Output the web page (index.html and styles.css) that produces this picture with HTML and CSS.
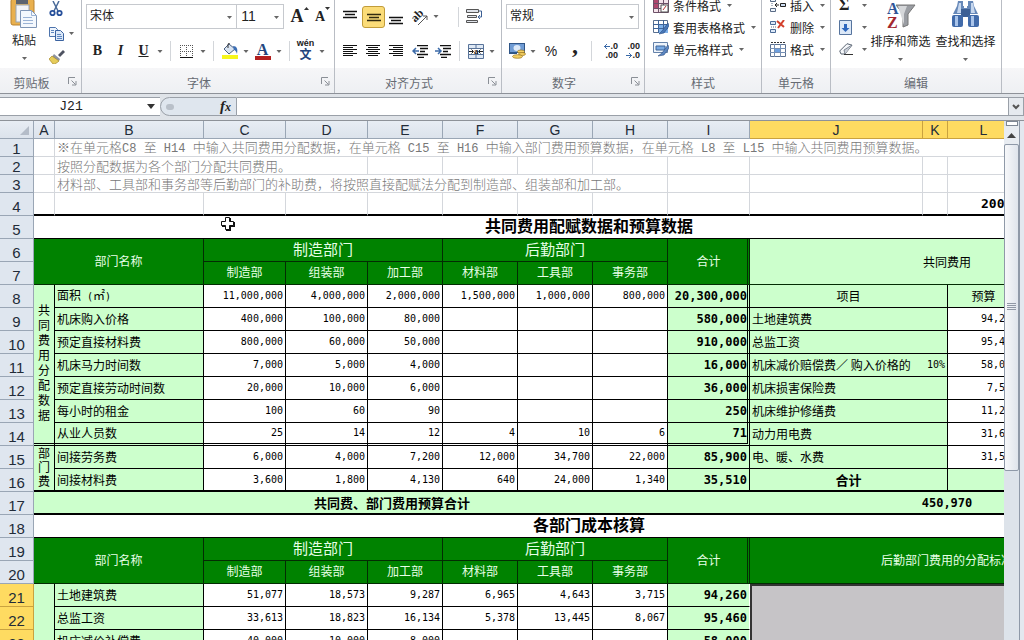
FILE: index.html
```html
<!DOCTYPE html>
<html lang="zh-CN">
<head>
<meta charset="utf-8">
<title>共同费用分配表</title>
<link rel="stylesheet" href="styles.css">
</head>
<body>
<svg class="defs" aria-hidden="true">
  <symbol id="arr" viewBox="0 0 5 3"><path d="M0 0h5L2.500 3z" fill="#666"/></symbol>
  <symbol id="launch" viewBox="0 0 9 9"><path d="M.5 7V.5H7M3.500 3.500l4 4M8 4v4H4" fill="none" stroke="#8a8f96"/></symbol>
</svg>

<div class="ribbon">
  <section class="group g-clip">
    <div class="body cols">
      <button class="big" aria-label="粘贴">
        <svg width="28" height="30" viewBox="0 0 28 30"><rect x="1" y="1" width="23" height="26" rx="2" fill="#e9b04e" stroke="#b98330"/><rect x="6" y="0" width="12" height="6" fill="#5c6470"/><rect x="6" y="7" width="13" height="17" fill="#f3f5f8" stroke="#9aa5b4"/><path d="M10.500 12.500h11l5 5v12h-16z" fill="#f4f8fd" stroke="#7f95b5"/><path d="M21.500 12.500v5h5M13 19.500h9M13 22.500h10M13 25.500h10" fill="none" stroke="#9bb3d5"/></svg>
        <span>粘贴</span>
        <svg class="arr"><use href="#arr"/></svg>
      </button>
      <div class="stack3">
        <button aria-label="剪切"><svg width="14" height="16" viewBox="0 0 14 16"><path d="M4 0l5 10M10 0L5 10" stroke="#4a6b99" stroke-width="1.500"/><circle cx="3.500" cy="12" r="2.200" fill="none" stroke="#27509b" stroke-width="1.800"/><circle cx="10.500" cy="12" r="2.200" fill="none" stroke="#27509b" stroke-width="1.800"/></svg></button>
        <button aria-label="复制"><svg width="16" height="14" viewBox="0 0 16 14"><path d="M.5.500h6l2 2v7h-8z" fill="#eef4fc" stroke="#4d74ad"/><path d="M6.500 3.500h5l3 3v7h-8z" fill="#dbe8f8" stroke="#3b63a0"/><path d="M2 3.500h3M2 5.500h3M8 7.500h4M8 9.500h5M8 11.500h5" stroke="#5f87c0"/></svg><svg class="arr"><use href="#arr"/></svg></button>
        <button aria-label="格式刷"><svg width="16" height="14" viewBox="0 0 16 14"><path d="M9 5l5-5 2 2-5 5z" fill="#4e5361"/><path d="M5 4l6 5-1 2-7-4z" fill="#8d93a0"/><path d="M3 6l7 5c-2 2-4 3-6 3L0 9z" fill="#e6cc5a" stroke="#a88a2a" stroke-width=".7"/></svg></button>
      </div>
    </div>
    <div class="caption has-launch">剪贴板<svg class="launch"><use href="#launch"/></svg></div>
  </section>

  <section class="group g-font">
    <div class="body">
      <div class="row upper">
        <label class="combo combo-font"><select aria-label="字体"><option>宋体</option></select><svg class="arr"><use href="#arr"/></svg></label>
        <label class="combo combo-size"><select aria-label="字号"><option>11</option></select><svg class="arr"><use href="#arr"/></svg></label>
        <button class="ic" aria-label="增大字号"><span class="serif grow">A</span><svg class="sup" width="5" height="3"><path d="M0 3h5L2.500 0z" fill="#333"/></svg></button>
        <button class="ic" aria-label="减小字号"><span class="serif shrink">A</span><svg class="sup" width="5" height="3"><path d="M0 0h5L2.500 3z" fill="#333"/></svg></button>
      </div>
      <div class="row lower">
        <button class="ic serif">B</button>
        <button class="ic serif"><i>I</i></button>
        <button class="ic serif"><u>U</u></button>
        <svg class="arr wide"><use href="#arr"/></svg><span class="sep"></span>
        <button class="ic" aria-label="边框"><svg width="13" height="13" viewBox="0 0 13 13"><path d="M.5 0v12M6.500 0v12M12.500 0v12M0 .5h13M0 6.500h13" stroke="#555" stroke-dasharray="1 1"/><path d="M0 12.500h13" stroke="#111"/></svg></button>
        <svg class="arr wide"><use href="#arr"/></svg><span class="sep"></span>
        <button class="ic" aria-label="填充颜色"><svg width="16" height="16" viewBox="0 0 16 16"><path d="M2 6l5-5 6 5-6 5z" fill="#d9e4f2" stroke="#4a5f80"/><path d="M6 5V1.500Q6 0 8 0" fill="none" stroke="#333"/><path d="M11 3c4 0 5 3 4 8-1-3-2-4-3-4z" fill="#3d6fb5"/><rect y="12" width="16" height="4" fill="#f6f61c"/></svg></button>
        <svg class="arr wide"><use href="#arr"/></svg>
        <button class="ic" aria-label="字体颜色"><span class="fontcolor serif">A</span></button>
        <svg class="arr wide"><use href="#arr"/></svg><span class="sep"></span>
        <button class="ic wen" aria-label="拼音"><span>wén</span><span>文</span></button>
        <svg class="arr wide"><use href="#arr"/></svg>
      </div>
    </div>
    <div class="caption has-launch">字体<svg class="launch"><use href="#launch"/></svg></div>
  </section>

  <section class="group g-align">
    <div class="body">
      <div class="row upper">
        <button class="ic" aria-label="顶端对齐"><svg width="15" height="14"><path d="M0 1.500h14M2 4.500h10M0 7.500h14" stroke="#111" stroke-width="1.500"/></svg></button>
        <button class="ic on" aria-label="垂直居中"><svg width="15" height="14"><path d="M1 4.500h14M3 7.500h10M1 10.500h14" stroke="#332b10" stroke-width="1.500"/></svg></button>
        <button class="ic" aria-label="底端对齐"><svg width="15" height="16"><path d="M0 8.500h14M2 11.500h10M0 14.500h14" stroke="#111" stroke-width="1.500"/></svg></button>
        <button class="ic" aria-label="方向"><svg width="22" height="20" viewBox="0 0 22 20"><g transform="rotate(-45 9 10)"><text x="3" y="12" class="abtext">ab</text></g><path d="M9 18l9-9M18 13V9h-4" fill="none" stroke="#555"/></svg></button>
        <svg class="arr wide"><use href="#arr"/></svg><span class="gap"></span><span class="sep"></span>
        <button class="ic" aria-label="自动换行"><svg width="17" height="15" viewBox="0 0 17 15"><path d="M.5.500h12v3H.5zM1.500 6.500h9v2h-9zM.5 11.500h11v2H.5z" fill="#dfe3ea" stroke="#555"/><path d="M13 2h2.500v6H12m2-2l-2 2 2 2" fill="none" stroke="#3b5f94"/></svg></button>
      </div>
      <div class="row lower">
        <button class="ic" aria-label="左对齐"><svg width="15" height="12"><path d="M0 .5h14M0 2.500h10M0 4.500h14M0 6.500h10M0 8.500h14M0 10.500h10" stroke="#111"/></svg></button>
        <button class="ic" aria-label="居中"><svg width="15" height="12"><path d="M0 .5h14M2 2.500h10M0 4.500h14M2 6.500h10M0 8.500h14M2 10.500h10" stroke="#111"/></svg></button>
        <button class="ic" aria-label="右对齐"><svg width="15" height="12"><path d="M0 .5h14M4 2.500h10M0 4.500h14M4 6.500h10M0 8.500h14M4 10.500h10" stroke="#111"/></svg></button>
        <button class="ic" aria-label="减少缩进"><svg width="16" height="13"><path d="M5 .5h11M8 3.500h8M8 6.500h5M5 9.500h11M6 12.500h6" stroke="#111" stroke-width="1.500"/><path d="M7 6H1m3-3L1 6l3 3" stroke="#3b6aa8" fill="none" stroke-width="1.500"/></svg></button>
        <button class="ic" aria-label="增加缩进"><svg width="16" height="13"><path d="M5 .5h11M8 3.500h8M8 6.500h5M5 9.500h11M6 12.500h6" stroke="#111" stroke-width="1.500"/><path d="M0 6h6M3 3l3 3-3 3" stroke="#3b6aa8" fill="none" stroke-width="1.500"/></svg></button>
        <span class="sep"></span>
        <button class="ic" aria-label="合并后居中"><svg width="16" height="15" viewBox="0 0 16 15"><path d="M.5.500h15v14H.5z" fill="#dfe9f5" stroke="#587399"/><path d="M8 0v4M8 11v4M0 4.500h16M0 10.500h16" stroke="#587399"/><path d="M1 5h14v5H1z" fill="#fff"/><path d="M1 7.500h4M11 7.500h4M3.500 5.500l2 2-2 2M12.500 5.500l-2 2 2 2" stroke="#222" fill="none"/><text x="6" y="10" class="atext">a</text></svg></button>
        <svg class="arr wide"><use href="#arr"/></svg>
      </div>
    </div>
    <div class="caption has-launch">对齐方式<svg class="launch"><use href="#launch"/></svg></div>
  </section>

  <section class="group g-num">
    <div class="body">
      <div class="row upper">
        <label class="combo combo-num"><select aria-label="数字格式"><option>常规</option></select><svg class="arr"><use href="#arr"/></svg></label>
      </div>
      <div class="row lower">
        <button class="ic" aria-label="会计数字格式"><svg width="17" height="16" viewBox="0 0 17 16"><rect x=".5" y=".5" width="15" height="9" fill="#6f9bd4" stroke="#2f5587"/><ellipse cx="8" cy="5" rx="3.500" ry="3" fill="#dbe8f8"/><path d="M0 10.500h8" stroke="#2f5587"/><ellipse cx="12" cy="8.500" rx="3.500" ry="1.500" fill="#f3cf62" stroke="#9a7420" stroke-width=".7"/><ellipse cx="13" cy="11" rx="3.500" ry="1.500" fill="#f3cf62" stroke="#9a7420" stroke-width=".7"/><ellipse cx="8.500" cy="13.500" rx="5" ry="1.800" fill="#f3cf62" stroke="#9a7420" stroke-width=".7"/></svg></button>
        <svg class="arr wide"><use href="#arr"/></svg>
        <button class="ic pct">%</button>
        <button class="ic serif comma">,</button>
        <span class="sep"></span>
        <button class="ic dec" aria-label="增加小数位数"><span><svg width="6" height="5"><path d="M0 2.500h6M3 0L.5 2.500 3 5" fill="none" stroke="#3b6aa8"/></svg>.0</span><span>.00</span></button>
        <button class="ic dec" aria-label="减少小数位数"><span>.00</span><span><svg width="6" height="5"><path d="M0 2.500h6M3 0l2.500 2.500L3 5" fill="none" stroke="#3b6aa8"/></svg>.0</span></button>
      </div>
    </div>
    <div class="caption has-launch">数字<svg class="launch"><use href="#launch"/></svg></div>
  </section>

  <section class="group g-style">
    <div class="body list">
      <button class="item"><svg width="16" height="15" viewBox="0 0 16 15"><path d="M.5.500h15v14H.5z" fill="#f5e3ea" stroke="#6d5068"/><path d="M1 1h4v9H1z" fill="#b0466e"/><path d="M0 5.500h16M0 10.500h16M5.500 0v15M10.500 0v15" stroke="#6d5068"/><path d="M8 7h7v7H8z" fill="#fff" stroke="#555"/><path d="M10 12l3-4" stroke="#b33"/></svg><span>条件格式</span><svg class="arr"><use href="#arr"/></svg></button>
      <button class="item"><svg width="16" height="15" viewBox="0 0 16 15"><path d="M.5.500h14v12H.5z" fill="#fff" stroke="#5a7090"/><path d="M5 4h10v9H5z" fill="#7fb1ea"/><path d="M0 4.500h15M0 8.500h15M5.500 0v13M10.500 0v13" stroke="#3f6498"/><path d="M15 3l-6 8-3 3 5-1 5-7z" fill="#4777b8" stroke="#2b4c80" stroke-width=".6"/></svg><span>套用表格格式</span><svg class="arr"><use href="#arr"/></svg></button>
      <button class="item"><svg width="16" height="15" viewBox="0 0 16 15"><path d="M.5.500h14v10H.5z" fill="#eef4fb" stroke="#6582aa"/><path d="M3 4h9v4H3z" fill="#79aae4" stroke="#3f6498"/><path d="M15 3l-6 8-4 3 6-1 5-7z" fill="#5c87c2" stroke="#2b4c80" stroke-width=".6"/></svg><span>单元格样式</span><svg class="arr"><use href="#arr"/></svg></button>
    </div>
    <div class="caption">样式</div>
  </section>

  <section class="group g-cells">
    <div class="body list">
      <button class="item"><svg width="16" height="14" viewBox="0 0 16 14"><path d="M.5.500h5v3h-5zM.5 10.500h5v3h-5z" fill="#eef4fb" stroke="#596b85"/><path d="M2 5v4" stroke="#596b85" stroke-dasharray="1 1"/><path d="M10.500 5.500h5v3h-5z" fill="#cfdff4" stroke="#222"/><path d="M9 7H5m2-2L5 7l2 2" fill="none" stroke="#222"/></svg><span>插入</span><svg class="arr"><use href="#arr"/></svg></button>
      <button class="item"><svg width="16" height="14" viewBox="0 0 16 14"><path d="M.5 1.500h5v3h-5zM.5 9.500h5v3h-5z" fill="#dbe8f8" stroke="#4b6a96"/><path d="M1 7h6" stroke="#596b85" stroke-dasharray="1 1"/><path d="M7 1l7 6M14 0L8 8" stroke="#d3402c" stroke-width="2"/></svg><span>删除</span><svg class="arr"><use href="#arr"/></svg></button>
      <button class="item"><svg width="16" height="15" viewBox="0 0 16 15"><path d="M.5 2.500h15v12H.5z" fill="#fff" stroke="#5a7090"/><path d="M5 6h6v5H5z" fill="#6fa1e0"/><path d="M0 6.500h16M0 10.500h16M4.500 2v13M10.500 2v13" stroke="#7690b5"/><path d="M1 .5h14" stroke="#333" stroke-dasharray="2 1"/></svg><span>格式</span><svg class="arr"><use href="#arr"/></svg></button>
    </div>
    <div class="caption">单元格</div>
  </section>

  <section class="group g-edit">
    <div class="body cols">
      <div class="list tight">
        <button class="item serif sigma"><span>Σ</span><svg class="arr"><use href="#arr"/></svg></button>
        <button class="item" aria-label="填充"><svg width="13" height="15" viewBox="0 0 13 15"><path d="M.5.500h12v14H.5z" fill="#dce8f7" stroke="#56749e"/><path d="M5 4h3v4h2.500l-4 4-4-4H5z" fill="#2c66bd"/></svg><svg class="arr"><use href="#arr"/></svg></button>
        <button class="item" aria-label="清除"><svg width="14" height="12" viewBox="0 0 14 12"><path d="M.7 8L8 .7l5 1.500L6 11H2z" fill="#f5f7fa" stroke="#5a6472"/><path d="M6 11L5 7l8-5" fill="#c9cfd8" stroke="#5a6472" stroke-width=".7"/><path d="M5 11.500h9" stroke="#333"/></svg><svg class="arr"><use href="#arr"/></svg></button>
      </div>
      <button class="big wide-l">
        <svg width="30" height="28" viewBox="0 0 30 28"><path d="M10 4h19l-7 9v11l-5 2V13z" fill="#9a9da3" stroke="#777"/><path d="M12 5h9l-3 8v11z" fill="#d5d7da"/><text x="1" y="13" class="az a">A</text><text x="1" y="27" class="az z">Z</text></svg>
        <span>排序和筛选</span><svg class="arr"><use href="#arr"/></svg>
      </button>
      <button class="big wide-l">
        <svg width="29" height="28" viewBox="0 0 29 28"><path d="M7 0h5v5h5V0h5l1 5 4 8H2l4-8z" fill="#6688b8"/><path d="M8 2h2v10H6zM20 2h2l2 10h-4z" fill="#c6d7ee"/><rect x="10" y="8" width="9" height="8" fill="#3c5f95"/><path d="M13 0h3v7h-3zM13 17h3v11h-3z" fill="#fff"/><rect x="1" y="14" width="11" height="12" rx="2" fill="#416baa"/><rect x="17" y="14" width="11" height="12" rx="2" fill="#416baa"/><path d="M4 15h3v10H4zM20 15h3v10h-3z" fill="#a9c4ea"/></svg>
        <span>查找和选择</span><svg class="arr"><use href="#arr"/></svg>
      </button>
    </div>
    <div class="caption">编辑</div>
  </section>
  <section class="group g-rest"><div class="body"></div><div class="caption"></div></section>
</div>

<div class="formula">
  <input class="name" aria-label="名称框" value="J21">
  <button class="namedrop" aria-label="名称列表"><svg width="8" height="5"><path d="M0 0h8L4 5z" fill="#333"/></svg></button>
  <div class="fx"><span class="knob"></span><button class="serif"><i>f</i><i class="x">x</i></button></div>
  <input class="content" aria-label="编辑栏" value="">
  <button class="expand" aria-label="展开编辑栏"><svg width="8" height="6"><path d="M1 1l3 3 3-3" fill="none" stroke="#555" stroke-width="2"/></svg></button>
</div>

<div class="sheet">
  <div class="grid">
    <table>
      <colgroup><col class="c-h"><col class="c-a"><col class="c-b"><col class="c-82"><col class="c-82"><col class="c-75"><col class="c-75"><col class="c-75"><col class="c-75"><col class="c-82"><col class="c-j"><col class="c-k"><col class="c-l"><col class="c-m"></colgroup>
      <thead>
        <tr><th class="corner"><svg width="9" height="9"><path d="M9 0v9H0z" fill="#b4bcc8"/></svg></th><th>A</th><th>B</th><th>C</th><th>D</th><th>E</th><th>F</th><th>G</th><th>H</th><th>I</th><th class="sel">J</th><th class="sel">K</th><th class="sel">L</th><th></th></tr>
      </thead>
      <tbody>
        <tr class="plain s"><th>1</th><td></td><td colspan="12" class="note">※在单元格<span>C8 </span>至<span> H14 </span>中输入共同费用分配数据，在单元格<span> C15 </span>至<span> H16 </span>中输入部门费用预算数据，在单元格<span> L8 </span>至<span> L15 </span>中输入共同费用预算数据。</td></tr>
        <tr class="plain s"><th>2</th><td></td><td colspan="3" class="note">按照分配数据为各个部门分配共同费用。</td><td></td><td></td><td></td><td></td><td></td><td></td><td></td><td></td><td></td></tr>
        <tr class="plain s"><th>3</th><td></td><td colspan="7" class="note">材料部、工具部和事务部等后勤部门的补助费，将按照直接配赋法分配到制造部、组装部和加工部。</td><td></td><td></td><td></td><td></td><td></td></tr>
        <tr class="plain thick"><th>4</th><td></td><td></td><td></td><td></td><td></td><td></td><td></td><td></td><td></td><td></td><td></td><td colspan="2" class="year">2009年</td></tr>
        <tr><th>5</th><td colspan="13" class="title">共同费用配赋数据和预算数据</td></tr>
        <tr class="head"><th>6</th><td colspan="2" rowspan="2">部门名称</td><td colspan="3" class="grp">制造部门</td><td colspan="3" class="grp">后勤部门</td><td rowspan="2" class="dbl">合计</td><td colspan="4" rowspan="2" class="lab mid">共同费用</td></tr>
        <tr class="head"><th>7</th><td>制造部</td><td>组装部</td><td>加工部</td><td>材料部</td><td>工具部</td><td>事务部</td></tr>
        <tr><th>8</th><td rowspan="7" class="vert last"><div>共同费用分配数据</div></td><td class="lab">面积<span class="half"> (</span>㎡<span class="half">)</span></td><td>11,000,000</td><td>4,000,000</td><td>2,000,000</td><td>1,500,000</td><td>1,000,000</td><td>800,000</td><td class="sum dbl">20,300,000</td><td colspan="2" class="lab mid">项目</td><td class="lab mid">预算</td><td></td></tr>
        <tr><th>9</th><td class="lab">机床购入价格</td><td>400,000</td><td>100,000</td><td>80,000</td><td></td><td></td><td></td><td class="sum dbl">580,000</td><td colspan="2" class="lab">土地建筑费</td><td>94,260</td><td></td></tr>
        <tr><th>10</th><td class="lab">预定直接材料费</td><td>800,000</td><td>60,000</td><td>50,000</td><td></td><td></td><td></td><td class="sum dbl">910,000</td><td colspan="2" class="lab">总监工资</td><td>95,460</td><td></td></tr>
        <tr><th>11</th><td class="lab">机床马力时间数</td><td>7,000</td><td>5,000</td><td>4,000</td><td></td><td></td><td></td><td class="sum dbl">16,000</td><td class="lab open">机床减价赔偿费∕ 购入价格的</td><td class="pc">10%</td><td>58,000</td><td></td></tr>
        <tr><th>12</th><td class="lab">预定直接劳动时间数</td><td>20,000</td><td>10,000</td><td>6,000</td><td></td><td></td><td></td><td class="sum dbl">36,000</td><td colspan="2" class="lab">机床损害保险费</td><td>7,500</td><td></td></tr>
        <tr><th>13</th><td class="lab">每小时的租金</td><td>100</td><td>60</td><td>90</td><td></td><td></td><td></td><td class="sum dbl">250</td><td colspan="2" class="lab">机床维护修缮费</td><td>11,250</td><td></td></tr>
        <tr><th>14</th><td class="lab last">从业人员数</td><td class="last">25</td><td class="last">14</td><td class="last">12</td><td class="last">4</td><td class="last">10</td><td class="last">6</td><td class="sum dbl last">71</td><td colspan="2" class="lab">动力用电费</td><td>31,600</td><td></td></tr>
        <tr><th>15</th><td rowspan="2" class="vert end"><div>部门费</div></td><td class="lab">间接劳务费</td><td>6,000</td><td>4,000</td><td>7,200</td><td>12,000</td><td>34,700</td><td>22,000</td><td class="sum">85,900</td><td colspan="2" class="lab">电、暖、水费</td><td>31,500</td><td></td></tr>
        <tr class="thick"><th>16</th><td class="lab">间接材料费</td><td>3,600</td><td>1,800</td><td>4,130</td><td>640</td><td>24,000</td><td>1,340</td><td class="sum">35,510</td><td colspan="2" class="lab mid strong">合计</td><td class="lab"></td><td class="lab"></td></tr>
        <tr class="thick"><th>17</th><td colspan="9" class="lab mid strong open">共同费、部门费用预算合计</td><td colspan="4" class="mid sumc">450,970</td></tr>
        <tr><th>18</th><td colspan="13" class="title">各部门成本核算</td></tr>
        <tr class="head"><th>19</th><td colspan="2" rowspan="2">部门名称</td><td colspan="3" class="grp">制造部门</td><td colspan="3" class="grp">后勤部门</td><td rowspan="2" class="dbl">合计</td><td colspan="4" rowspan="2">后勤部门费用的分配标准</td></tr>
        <tr class="head"><th>20</th><td>制造部</td><td>组装部</td><td>加工部</td><td>材料部</td><td>工具部</td><td>事务部</td></tr>
        <tr><th class="sel">21</th><td rowspan="3" class="lab"></td><td class="lab">土地建筑费</td><td>51,077</td><td>18,573</td><td>9,287</td><td>6,965</td><td>4,643</td><td>3,715</td><td class="sum edge">94,260</td><td colspan="4" rowspan="3" class="picked"></td></tr>
        <tr><th class="sel">22</th><td class="lab">总监工资</td><td>33,613</td><td>18,823</td><td>16,134</td><td>5,378</td><td>13,445</td><td>8,067</td><td class="sum edge">95,460</td></tr>
        <tr><th class="sel">23</th><td class="lab">机床减价补偿费</td><td>40,000</td><td>10,000</td><td>8,000</td><td></td><td></td><td></td><td class="sum edge">58,000</td></tr>
      </tbody>
    </table>
    <svg class="cursor" width="16" height="16" viewBox="0 0 16 16"><path d="M6 2h5v4h4v5h-4v4H6v-4H2V6h4z" fill="#111"/><path d="M5.500 1.500h4v4h4v4h-4v4h-4v-4h-4v-4h4z" fill="#fff" stroke="#111"/></svg>
  </div>
  <div class="scroll">
    <div class="split"></div>
    <button class="up" aria-label="向上滚动"><svg width="9" height="5"><path d="M0 5h9L4.500 0z" fill="#444"/></svg></button>
    <div class="thumb"><svg width="9" height="8"><path d="M0 .5h9M0 2.500h9M0 4.500h9M0 6.500h9" stroke="#9098a6"/></svg></div>
  </div>
</div>
</body>
</html>
```

FILE: styles.css
```css
* { box-sizing: border-box; }
body {
  margin: 0;
  height: 100vh;
  overflow: hidden;
  display: flex;
  flex-direction: column;
  font-family: "Liberation Sans", "Noto Sans CJK SC", sans-serif;
  font-size: 12px;
  color: #222;
  background: #d8dde3;
}
.defs { display: none; }
button, input, select {
  font: inherit;
  color: inherit;
  background: none;
  border: 0;
  padding: 0;
  margin: 0;
  border-radius: 0;
}
svg { flex: none; display: block; }
.arr { width: 5px; height: 3px; }
.arr.wide { width: 10px; height: 3px; }
.serif { font-family: "Liberation Serif", serif; font-weight: bold; }

/* Ribbon */
.ribbon {
  flex: none;
  display: flex;
  background: #fff;
  border-bottom: 1px solid #8e9299;
}
.group {
  flex: none;
  display: flex;
  flex-direction: column;
  border-right: 1px solid #b9bdc4;
}
.body {
  height: 68px;
  overflow: hidden;
  display: flex;
  flex-direction: column;
  justify-content: flex-end;
  gap: 8px;
  padding: 0 4px 3px;
}
.body.cols {
  flex-direction: row;
  justify-content: flex-start;
  align-items: flex-end;
  gap: 2px;
}
.g-clip .body.cols { padding-bottom: 0; }
.body.list, .list {
  display: flex;
  flex-direction: column;
  gap: 0;
  padding: 0 8px 8px;
}
.body .list.tight { padding: 0 0 5px; }
.caption {
  height: 25px;
  display: flex;
  align-items: center;
  justify-content: center;
  position: relative;
  padding-top: 4px;
  color: #666b73;
  background: linear-gradient(#f6f6f8, #eef0f3);
}
.caption.has-launch { padding-right: 18px; }
.launch { position: absolute; right: 4px; bottom: 7px; width: 9px; height: 9px; }
.g-clip { width: 82px; }
.g-font { width: 253px; }
.g-align { width: 167px; }
.g-num { width: 143px; }
.g-style { width: 117px; }
.g-cells { width: 69px; }
.g-edit { width: 171px; }
.g-rest { flex: 1; border-right: 0; }

.row { display: flex; align-items: center; }
.upper { height: 25px; }
.lower { height: 28px; }
.ic {
  width: 23px;
  height: 22px;
  display: flex;
  align-items: center;
  justify-content: center;
  font-size: 14px;
}
.ic.on { background: #fbdc78; border: 1px solid #c19c3a; border-radius: 3px; }
.gap { width: 12px; }
.sep { width: 10px; height: 20px; background: linear-gradient(90deg, transparent 5px, #d3d6da 5px, #d3d6da 6px, transparent 6px); }
.combo { position: relative; height: 25px; border: 1px solid #c6c9ce; display: flex; }
.combo select { appearance: none; flex: 1; padding: 0 0 2px 3px; }
.combo .arr { position: absolute; right: 4px; top: 11px; }
.combo-font { width: 152px; }
.combo-size { width: 47px; border-left: 0; }
.combo-size select { padding-left: 4px; font-size: 14px; }
.combo-num { width: 133px; }
.grow { font-size: 18px; margin-left: 8px; }
.shrink { font-size: 14px; margin-left: 8px; }
.sup { align-self: flex-start; margin-top: 1px; }
.fontcolor { color: #23467e; font-size: 16px; line-height: 13px; border-bottom: 4px solid #b3201f; width: 16px; }
.wen { flex-direction: column; font-size: 9px; font-weight: bold; }
.wen span { line-height: 9px; }
.wen span + span { font-size: 12px; line-height: 15px; color: #22447c; }
.abtext { font: bold 12px "Liberation Serif", serif; fill: #222; }
.atext { font: bold 9px "Liberation Serif", serif; fill: #111; }
.az { font: bold 16px "Liberation Serif", serif; }
.az.a { fill: #2f5597; }
.az.z { fill: #a3282f; }
.pct { width: 27px; }
.comma { font-size: 24px; padding-bottom: 12px; }
.dec { flex-direction: column; align-items: flex-end; font-size: 9px; font-weight: bold; }
.dec span { display: flex; align-items: center; line-height: 9px; }

.big { display: flex; flex-direction: column; align-items: center; width: 40px; padding-bottom: 4px; }
.g-clip .big { padding-bottom: 8px; }
.big span { line-height: 16px; margin: 5px 0 8px; white-space: nowrap; }
.big.wide-l { width: 64px; }
.stack3 { display: flex; flex-direction: column; }
.stack3 button { flex: none; height: 25px; display: flex; align-items: center; gap: 4px; padding-left: 3px; }
.stack3 button:last-child { height: 22px; }
.item { flex: none; height: 22px; display: flex; align-items: center; gap: 4px; white-space: nowrap; }
.item .arr { margin-left: 2px; }
.tight .item { width: 28px; justify-content: space-between; margin-left: 4px; }
.sigma { font-size: 16px; }

/* Formula bar */
.formula {
  flex: none;
  display: flex;
  height: 27px;
  padding: 3px 0 4px;
  background: #dfe3e8;
  border-bottom: 1px solid #8e9299;
}
.formula > * { border-top: 1px solid #9aa0a8; border-bottom: 1px solid #9aa0a8; }
.name { width: 142px; background: #fff; text-align: center; font-family: "Liberation Mono", monospace; font-size: 13px; }
.namedrop { width: 18px; background: #fff; display: flex; align-items: center; justify-content: center; }
.fx {
  width: 77px;
  display: flex;
  align-items: center;
  justify-content: space-between;
  padding: 0 5px;
  background: #dfe6ee;
  border-left: 1px solid #9aa0a8;
  border-right: 1px solid #9aa0a8;
  border-radius: 10px 0 0 10px;
}
.knob { width: 8px; height: 6px; border-radius: 4px; background: #b9c0c9; }
.fx button { font-size: 15px; line-height: 15px; }
.fx .x { font-size: 12px; }
.content { flex: 1; min-width: 0; background: #fff; }
.expand { width: 16px; display: flex; align-items: center; justify-content: center; background: #e6eaef; border: 1px solid #9aa0a8; }

/* Worksheet */
.sheet { flex: 1; min-height: 0; display: flex; padding-right: 4px; background: #e3e8ef; }
.grid { flex: 1; min-width: 0; position: relative; overflow: hidden; background: #fff; }
.cursor { position: absolute; left: 220px; top: 95px; }
table { table-layout: fixed; width: 1143px; border-collapse: separate; border-spacing: 0; }
.c-h { width: 34px; }
.c-a { width: 21px; }
.c-b { width: 149px; }
.c-82 { width: 82px; }
.c-75 { width: 75px; }
.c-j { width: 173px; }
.c-k { width: 25px; }
.c-l { width: 72px; }
.c-m { width: 125px; }
th {
  height: 23px;
  padding: 0;
  font-weight: normal;
  font-size: 15px;
  line-height: 17px;
  vertical-align: bottom;
  color: #222b38;
  background: #dfe6ef;
  border-right: 1px solid #9aa6b5;
  border-bottom: 1px solid #9aa6b5;
}
thead th { height: 18px; font-size: 14px; line-height: 16px; background: linear-gradient(#e8edf4, #dce3ec); }
th.sel { background: #fedb61; border-color: #c9a23f; }
.corner svg { margin: 0 4px 3px auto; }
.s th { height: 18px; line-height: 15px; }
td {
  padding: 0 2px 0 2px;
  font-family: "DejaVu Sans Mono", "Noto Sans CJK SC", monospace;
  font-size: 10px;
  line-height: 18px;
  text-align: right;
  white-space: nowrap;
  overflow: hidden;
  color: #000;
  border-right: 1px solid #000;
  border-bottom: 1px solid #000;
}
.plain td { border-color: #d4d7dc; }
.plain.s td { line-height: 14px; }
.plain.thick td { border-bottom-color: #000; }
.thick td, td.end { border-bottom: 2px solid #000; }
td.note { text-align: left; font-family: "Noto Sans CJK SC", sans-serif; font-weight: 300; font-size: 13px; color: #777; }
.note span { font-family: "Liberation Mono", monospace; font-size: 12px; white-space: pre; }
td.year { text-align: left; padding-left: 33px; font-size: 13px; font-weight: bold; }
td.title { text-align: center; font-size: 16px; font-weight: bold; line-height: 20px; }
td.lab { background: #cfc; text-align: left; font-family: "Noto Sans CJK SC", sans-serif; font-size: 12px; }
td.mid, td.lab.mid { text-align: center; }
td.strong { font-size: 13px; font-weight: bold; }
td.open { border-right: 0; }
td.pc { background: #cfc; }
.half { font-family: "DejaVu Sans Mono", monospace; font-size: 10px; white-space: pre; }
td.sum, td.sumc { background: #cfc; font-family: "DejaVu Sans Mono", monospace; font-size: 12px; font-weight: bold; }
td.dbl { border-right: 3px double #000; }
td.sum.dbl, .head td.dbl { padding-right: 0; }
td.last { border-bottom: 3px double #000; }
.head td { background: #008200; color: #e6ffe6; text-align: center; font-size: 12px; border-color: #032c03; }
.head td.grp { font-size: 15px; }
.head td.lab { background: #cfc; color: #000; }
td.vert { background: #cfc; padding: 0; white-space: normal; text-align: center; font-size: 12px; line-height: 15px; }
td.end { line-height: 14px; }
.vert div { width: 12px; margin: 0 auto; }
td.edge { border-right: 1px solid #fff; }
td.picked { background: #c6c4c7; border-left: 2px solid #333; border-top: 2px solid #333; }

/* Scroll bar */
.scroll { width: 16px; display: flex; flex-direction: column; align-items: center; border-right: 1px solid #8f99a8; background: #dde3ea; }
.split { width: 12px; height: 5px; background: #fff; border: 1px solid #7e8794; }
.up { width: 15px; height: 18px; display: flex; align-items: center; justify-content: center; background: #e8ecf1; }
.thumb {
  width: 15px;
  height: 63%;
  display: flex;
  align-items: center;
  justify-content: center;
  background: linear-gradient(90deg, #f7f8fa, #dfe4ec);
  border: 1px solid #8f99a8;
  border-radius: 2px;
}
```
